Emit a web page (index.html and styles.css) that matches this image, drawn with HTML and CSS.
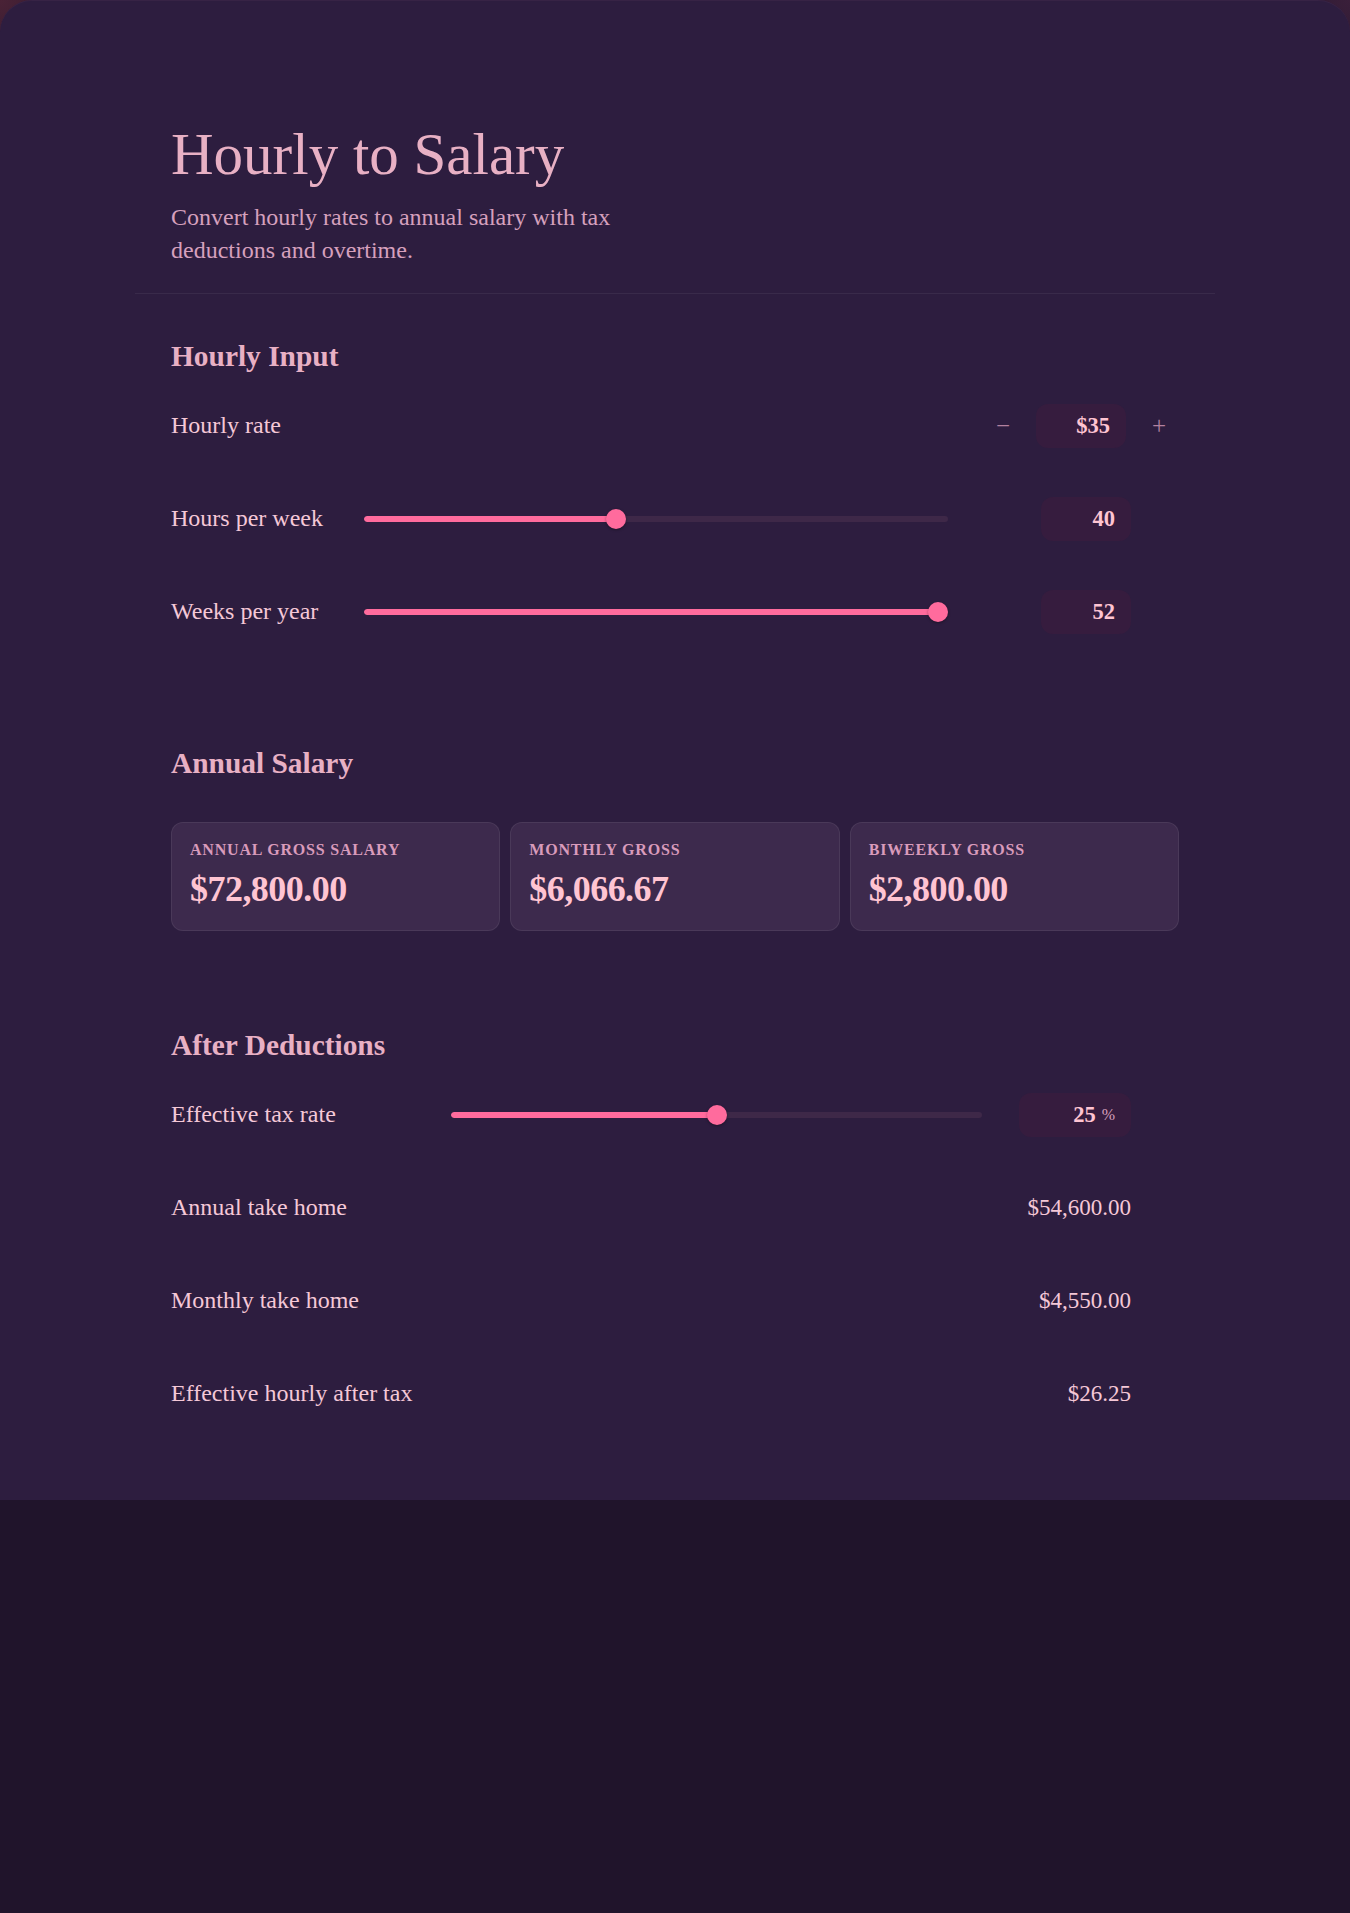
FILE: index.html
```html
<!DOCTYPE html>
<html lang="en">
<head>
<meta charset="utf-8">
<title>Hourly to Salary</title>
<link rel="stylesheet" href="styles.css">
</head>
<body>
<div class="panel">
  <div class="container">
    <header class="header">
      <h1 class="title">Hourly to Salary</h1>
      <p class="subtitle">Convert hourly rates to annual salary with tax deductions and overtime.</p>
    </header>

    <section class="section section-input">
      <h2 class="heading">Hourly Input</h2>
      <div class="row row-stepper">
        <span class="label">Hourly rate</span>
        <div class="stepper">
          <button class="step-btn" type="button">&minus;</button>
          <div class="value-box">$35</div>
          <button class="step-btn" type="button">+</button>
        </div>
      </div>
      <div class="row row-slider">
        <span class="label">Hours per week</span>
        <div class="slider" style="--p:0.4286">
          <div class="track"><div class="fill"></div></div>
          <div class="thumb"></div>
        </div>
        <div class="value-box">40</div>
        <span class="unit"></span>
      </div>
      <div class="row row-slider">
        <span class="label">Weeks per year</span>
        <div class="slider" style="--p:1">
          <div class="track"><div class="fill"></div></div>
          <div class="thumb"></div>
        </div>
        <div class="value-box">52</div>
        <span class="unit"></span>
      </div>
    </section>

    <section class="section section-salary">
      <h2 class="heading">Annual Salary</h2>
      <div class="cards">
        <div class="card">
          <div class="card-label">Annual Gross Salary</div>
          <div class="card-value">$72,800.00</div>
        </div>
        <div class="card">
          <div class="card-label">Monthly Gross</div>
          <div class="card-value">$6,066.67</div>
        </div>
        <div class="card">
          <div class="card-label">Biweekly Gross</div>
          <div class="card-value">$2,800.00</div>
        </div>
      </div>
    </section>

    <section class="section section-deductions">
      <h2 class="heading">After Deductions</h2>
      <div class="row row-tax">
        <span class="label">Effective tax rate</span>
        <div class="slider" style="--p:0.5">
          <div class="track"><div class="fill"></div></div>
          <div class="thumb"></div>
        </div>
        <div class="value-box value-box-wide">25<span class="pct">%</span></div>
        <span class="unit"></span>
      </div>
      <div class="row row-result">
        <span class="label">Annual take home</span>
        <span class="result">$54,600.00</span>
        <span class="unit"></span>
      </div>
      <div class="row row-result">
        <span class="label">Monthly take home</span>
        <span class="result">$4,550.00</span>
        <span class="unit"></span>
      </div>
      <div class="row row-result">
        <span class="label">Effective hourly after tax</span>
        <span class="result">$26.25</span>
        <span class="unit"></span>
      </div>
    </section>
  </div>
</div>
</body>
</html>
```

FILE: styles.css
```css
* { box-sizing: border-box; }

html, body {
  margin: 0;
  padding: 0;
}

body {
  min-height: 1913px;
  background:
    radial-gradient(circle at 0 0, #4a2236 0, rgba(74, 34, 54, 0) 120px),
    radial-gradient(circle at 100% 0, #3a1f3a 0, rgba(58, 31, 58, 0) 120px),
    #20142b;
  font-family: "Liberation Serif", "Times New Roman", serif;
  color: #f5c8d7;
}

.panel {
  background: #2d1d3f;
  border-radius: 32px 32px 0 0;
  box-shadow: inset 0 1px 0 rgba(255, 150, 200, 0.05);
  padding: 122px 0 60px;
}

.container {
  width: 1080px;
  margin: 0 auto;
}

.header {
  padding: 0 36px 26px;
  border-bottom: 1px solid rgba(255, 255, 255, 0.06);
}

.title {
  margin: 0;
  font-size: 59px;
  font-weight: normal;
  line-height: 64px;
  color: #e8b0c4;
}

.subtitle {
  margin: 15px 0 0;
  max-width: 480px;
  font-size: 24px;
  line-height: 33px;
  color: #d6a0bd;
}

.section {
  padding: 0 36px;
}

.section-input { padding-top: 45px; }
.section-salary { margin-top: 88px; }
.section-deductions { margin-top: 97px; }

.heading {
  margin: 0 0 5px;
  font-size: 29.4px;
  font-weight: bold;
  line-height: 35px;
  color: #e8b0c4;
}

.row {
  display: grid;
  align-items: center;
  column-gap: 16px;
  min-height: 93px;
}

.row-stepper { grid-template-columns: 1fr auto; }
.row-slider { grid-template-columns: 177px 584px 1fr 32px; }
.row-tax { grid-template-columns: 264px 531px 1fr 32px; }
.row-result { grid-template-columns: 1fr auto 32px; }

.label {
  font-size: 24px;
  color: #f5c8d7;
}

.stepper {
  display: flex;
  align-items: center;
  gap: 13px;
}

.step-btn {
  width: 40px;
  height: 44px;
  padding: 0;
  border: none;
  background: transparent;
  font-family: "Liberation Serif", "Times New Roman", serif;
  font-size: 25px;
  color: #b2819f;
}

.value-box {
  justify-self: end;
  width: 90px;
  height: 44px;
  padding: 0 16px;
  border-radius: 12px;
  background: #361c3e;
  display: flex;
  align-items: center;
  justify-content: flex-end;
  font-size: 22.5px;
  font-weight: bold;
  color: #ffc4d2;
}

.value-box-wide { width: 112px; }

.pct {
  margin-left: 6px;
  font-size: 16px;
  font-weight: normal;
  color: #d6a0bd;
}

.slider {
  position: relative;
  height: 20px;
  display: flex;
  align-items: center;
}

.track {
  flex: 1;
  height: 6px;
  border-radius: 3px;
  background: #3e2848;
  overflow: hidden;
}

.fill {
  height: 100%;
  width: calc(var(--p) * (100% - 20px) + 10px);
  background: #ff6b9d;
  border-radius: 3px;
}

.thumb {
  position: absolute;
  top: 0;
  left: calc(var(--p) * (100% - 20px));
  width: 20px;
  height: 20px;
  border-radius: 50%;
  background: #ff6b9d;
  box-shadow: 0 1px 3px rgba(0, 0, 0, 0.35);
}

.result {
  font-size: 23px;
  color: #f5c8d7;
  text-align: right;
}

.cards {
  margin-top: 41px;
  display: grid;
  grid-template-columns: repeat(3, 1fr);
  gap: 10px;
}

.card {
  background: #3d2a4d;
  border: 1px solid rgba(255, 255, 255, 0.07);
  border-radius: 12px;
  padding: 18px 18px 21px;
}

.card-label {
  font-size: 16px;
  line-height: 18px;
  font-weight: bold;
  letter-spacing: 0.05em;
  text-transform: uppercase;
  color: #d99bbb;
  margin-bottom: 10px;
}

.card-value {
  font-size: 36px;
  line-height: 40px;
  font-weight: bold;
  letter-spacing: -0.015em;
  color: #ffc4d2;
}
```
